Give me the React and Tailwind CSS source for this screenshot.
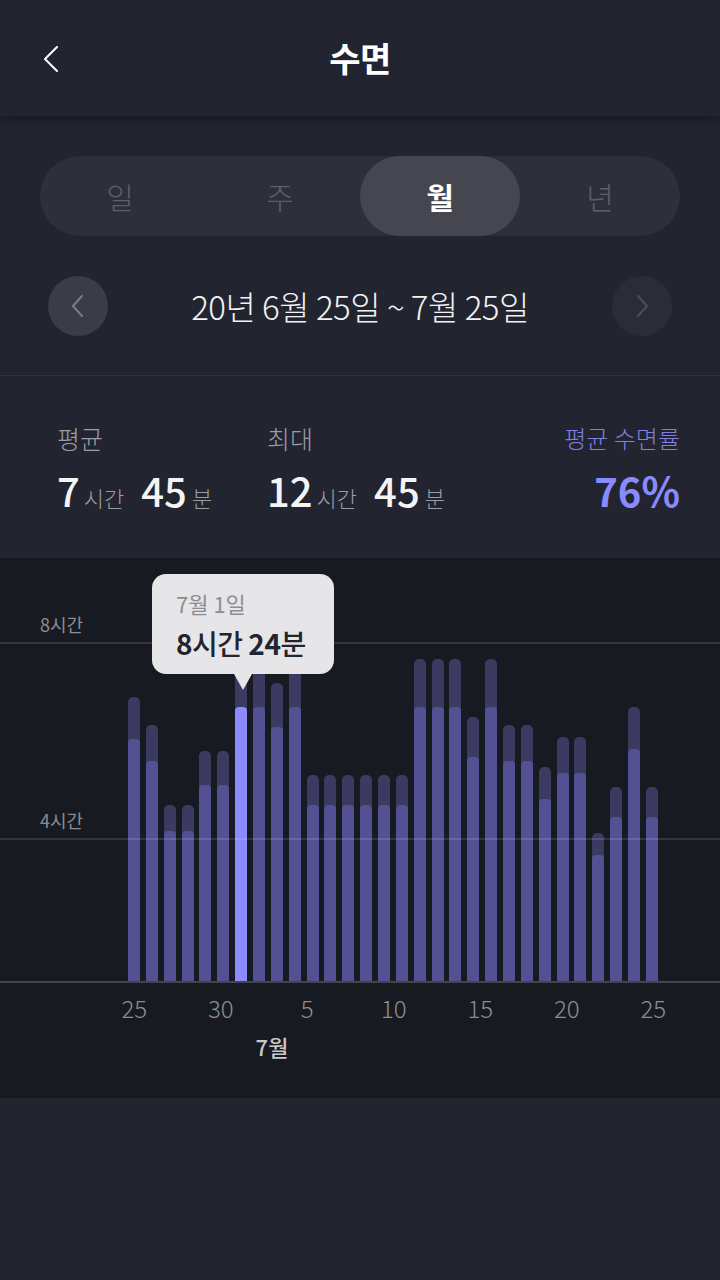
import React from "react";

const bars = [
  [698, 740], [726, 762], [806, 832], [806, 832], [752, 786], [752, 786],
  [660, 708], [660, 708], [684, 728], [660, 708],
  [776, 806], [776, 806], [776, 806], [776, 806], [776, 806], [776, 806],
  [660, 708], [660, 708], [660, 708], [718, 758], [660, 708],
  [726, 762], [726, 762], [768, 800], [738, 774], [738, 774],
  [834, 856], [788, 818], [708, 750], [788, 818],
];

const BASE = 982;

function Chevron({ dir = "left", className = "", stroke = "#fff", w = 2 }) {
  return (
    <svg width="20" height="28" viewBox="0 0 20 28" className={className}>
      <polyline
        points={dir === "left" ? "15,2 3,14 15,26" : "5,2 17,14 5,26"}
        fill="none"
        stroke={stroke}
        strokeWidth={w}
        strokeLinecap="round"
        strokeLinejoin="round"
      />
    </svg>
  );
}

function SmallChevron({ dir = "left", stroke }) {
  return (
    <svg width="14" height="22" viewBox="0 0 14 22">
      <polyline
        points={dir === "left" ? "11,1 2,11 11,21" : "3,1 12,11 3,21"}
        fill="none"
        stroke={stroke}
        strokeWidth="2"
        strokeLinecap="round"
        strokeLinejoin="round"
      />
    </svg>
  );
}

export default function App() {
  const xLabels = ["25", "30", "5", "10", "15", "20", "25"];
  return (
    <div className="w-[720px] min-h-[1280px] bg-[#222430] font-['Noto_Sans_CJK_KR','Noto_Sans',sans-serif] text-white">
      {/* Header */}
      <div className="relative z-10 h-[116px] bg-[#222430] shadow-[0_4px_8px_rgba(0,0,0,0.3)] flex items-center justify-center">
        <div className="absolute left-[42px] top-[45px]">
          <Chevron dir="left" stroke="#ffffff" w={2} />
        </div>
        <div className="text-[34px] font-bold leading-none tracking-[-0.5px] text-white">수면</div>
      </div>

      {/* Tabs */}
      <div className="pt-[40px] px-[40px]">
        <div className="h-[80px] rounded-full bg-[#2d2f3b] flex">
          {["일", "주", "월", "년"].map((t) => (
            <div
              key={t}
              className={
                t === "월"
                  ? "w-[160px] h-full rounded-full bg-[#45464f] flex items-center justify-center text-[30px] font-bold text-white"
                  : "w-[160px] h-full flex items-center justify-center text-[30px] font-light text-[#5d5f69]"
              }
            >
              {t}
            </div>
          ))}
        </div>
      </div>

      {/* Date nav */}
      <div className="mt-[40px] px-[48px] flex items-center justify-between">
        <div className="w-[60px] h-[60px] rounded-full bg-[#3a3c47] flex items-center justify-center">
          <SmallChevron dir="left" stroke="#7a7c86" />
        </div>
        <div className="text-[33px] leading-none font-light text-[#f2f2f2] tracking-[-0.5px]">
          20년 6월 25일 ~ 7월 25일
        </div>
        <div className="w-[60px] h-[60px] rounded-full bg-[#2a2c38] flex items-center justify-center">
          <SmallChevron dir="right" stroke="#4b4d59" />
        </div>
      </div>

      <div className="mt-[39px] h-[1px] bg-[#30323d]" />

      {/* Stats */}
      <div className="h-[182px] pt-[46px] pl-[57px] pr-[40px] flex">
        <div className="w-[210px]">
          <div className="text-[25px] leading-[32px] font-light text-[#9b9da5]">평균</div>
          <div className="mt-[12px] flex items-baseline leading-[48px]">
            <span className="text-[40px] font-medium text-[#f4f4f4]">7</span>
            <span className="ml-[4px] text-[22px] font-light text-[#9b9da5]">시간</span>
            <span className="ml-[17px] text-[40px] font-medium text-[#f4f4f4]">45</span>
            <span className="ml-[5px] text-[22px] font-light text-[#9b9da5]">분</span>
          </div>
        </div>
        <div className="flex-1">
          <div className="text-[25px] leading-[32px] font-light text-[#9b9da5]">최대</div>
          <div className="mt-[12px] flex items-baseline leading-[48px]">
            <span className="text-[40px] font-medium text-[#f4f4f4]">12</span>
            <span className="ml-[4px] text-[22px] font-light text-[#9b9da5]">시간</span>
            <span className="ml-[17px] text-[40px] font-medium text-[#f4f4f4]">45</span>
            <span className="ml-[5px] text-[22px] font-light text-[#9b9da5]">분</span>
          </div>
        </div>
        <div className="flex flex-col items-end">
          <div className="text-[24px] leading-[32px] font-light text-[#7f7fe4]">평균 수면률</div>
          <div className="mt-[12px] text-[40px] leading-[48px] font-bold text-[#8a8aff]">76%</div>
        </div>
      </div>

      {/* Chart */}
      <div className="relative h-[540px] bg-[#181a21] overflow-hidden">
        {/* y labels + gridlines */}
        <div className="absolute left-[40px] top-[54px] text-[18px] leading-[24px] text-[#8a8b91]">8시간</div>
        <div className="absolute left-0 right-0 top-[84px] h-[2px] bg-white/[0.12]" />
        <div className="absolute left-[40px] top-[250px] text-[18px] leading-[24px] text-[#8a8b91]">4시간</div>
        <div className="absolute left-0 right-0 top-[280px] h-[2px] bg-white/[0.12]" />

        {/* bars */}
        <div className="ml-[128px] w-[530px] h-[423px] flex items-end justify-between">
          {bars.map(([outer, inner], i) => (
            <div
              key={i}
              className="w-[12px] rounded-t-[5px] bg-[#3b3a61] flex flex-col justify-end overflow-hidden"
              style={{ height: BASE - outer }}
            >
              <div
                className={
                  i === 6
                    ? "w-full rounded-t-[4px] bg-[#8b8bff]"
                    : "w-full rounded-t-[4px] bg-[#545094]"
                }
                style={{ height: BASE - inner }}
              />
            </div>
          ))}
        </div>
        <div className="h-[2px] bg-[#44454c]" />

        {/* x labels */}
        <div className="mt-[11px] ml-[91px] flex">
          {xLabels.map((l, i) => (
            <div key={i} className="w-[86.5px] text-center text-[24px] leading-[28px] font-light text-[#8d8e94]">
              {l}
            </div>
          ))}
        </div>
        <div className="mt-[10px] ml-[232px] w-[80px] text-center text-[22px] leading-[28px] font-medium text-[#c9c9cd]">
          7월
        </div>

        {/* tooltip */}
        <div className="absolute left-[152px] top-[16px] w-[182px] h-[100px] rounded-[14px] bg-[#e6e6e8] pl-[24px] pt-[14px]">
          <div className="text-[22px] leading-[30px] text-[#8c8d93]">7월 1일</div>
          <div className="mt-[9px] text-[28px] leading-[32px] text-[#22242e] font-medium tracking-[-0.5px]">
            <span className="font-bold">8</span>시간 <span className="font-bold">24</span>분
          </div>
          <div className="absolute left-[82px] top-[100px] w-0 h-0 border-l-[9px] border-r-[9px] border-t-[16px] border-l-transparent border-r-transparent border-t-[#e6e6e8]" />
        </div>
      </div>
    </div>
  );
}
